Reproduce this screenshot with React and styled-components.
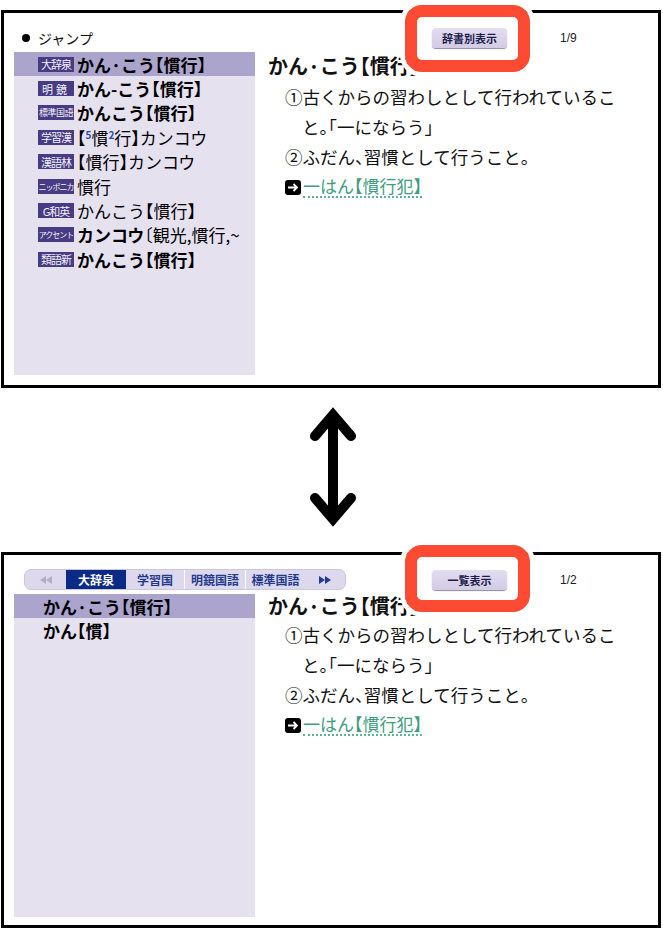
import styled, { createGlobalStyle } from "styled-components";

const GlobalStyle = createGlobalStyle`
  body {
    margin: 0;
    background: #fff;
    font-family: "Noto Sans CJK JP", "Noto Sans", sans-serif;
    color: #111;
  }
`;

const Page = styled.div`
  width: 663px;
  padding: 10px 0 0 1px;
  box-sizing: border-box;
`;

const Frame = styled.div`
  position: relative;
  width: 660px;
  height: ${(props) => props.height}px;
  box-sizing: border-box;
  border: 3px solid #000;
  display: flex;
  flex-direction: column;
  padding: 0 0 ${(props) => props.bottom}px 10px;
`;

const Highlight = styled.div`
  position: absolute;
  left: 401px;
  top: ${(props) => props.top}px;
  width: 125px;
  height: 67px;
  box-sizing: border-box;
  border: 12px solid #fd4a33;
  border-radius: 17px;
  box-shadow: 0 0 0 5px #fff;
  pointer-events: none;
`;

const Header = styled.div`
  height: 39px;
  flex-shrink: 0;
  display: grid;
  grid-template-columns: 418px 128px auto;
  align-items: center;
  padding-top: 10px;
  box-sizing: border-box;
`;

const Jump = styled.div`
  display: flex;
  align-items: center;
  gap: 8px;
  padding-left: 8px;
  font-size: 14px;

  &::before {
    content: "";
    width: 8px;
    height: 8px;
    border-radius: 50%;
    background: #000;
  }
`;

const ModeButton = styled.div`
  width: 75px;
  height: 20px;
  display: flex;
  align-items: center;
  justify-content: center;
  border-radius: 4px;
  background: linear-gradient(#e2ddf0, #d2cbe4);
  box-shadow: 0 1px 1px 0 #8f8aa3;
  font-size: 11px;
  font-weight: bold;
  color: #1d1d4d;
`;

const PageCount = styled.div`
  font-family: "Liberation Sans", Arial, sans-serif;
  font-size: 12px;
  color: #222;
`;

const TabBar = styled.div`
  margin-left: 10px;
  width: 322px;
  height: 21px;
  box-sizing: border-box;
  display: flex;
  align-items: stretch;
  background: #ddd8eb;
  border: 1px solid #cbc5de;
  border-radius: 7px;
  overflow: hidden;
`;

const Tab = styled.div`
  width: ${(props) => props.width}px;
  display: flex;
  align-items: center;
  justify-content: center;
  font-size: 12px;
  font-weight: bold;
  color: ${(props) => (props.active ? "#fff" : "#1f3a8f")};
  background: ${(props) => (props.active ? "#0b2a86" : "transparent")};
  border-right: ${(props) => (props.divider ? "1px solid #fff" : "none")};
  box-sizing: border-box;
`;

const Body = styled.div`
  flex: 1;
  display: grid;
  grid-template-columns: 241px 1fr;
  column-gap: 13px;
  min-height: 0;
`;

const List = styled.div`
  background: #e6e1ef;
  overflow: hidden;
`;

const Row = styled.div`
  height: ${(props) => props.h}px;
  display: flex;
  align-items: center;
  gap: 3px;
  padding-left: ${(props) => props.indent}px;
  background: ${(props) => (props.selected ? "#aba5cd" : "transparent")};
  white-space: nowrap;
  overflow: hidden;
`;

const DictLabel = styled.span`
  flex-shrink: 0;
  width: 36px;
  height: 15px;
  display: inline-flex;
  align-items: center;
  justify-content: center;
  background: #473b83;
  color: #f4f2fa;
  font-size: ${(props) => props.size}px;
  letter-spacing: ${(props) => props.spacing}px;
  white-space: nowrap;
  overflow: hidden;
`;

const Word = styled.span`
  font-size: 17px;
  font-weight: ${(props) => (props.bold ? "bold" : "normal")};
  font-feature-settings: "halt";
  color: #000;
`;

const Sup = styled.sup`
  font-size: 10px;
  font-weight: bold;
  color: #2449b3;
  vertical-align: 6px;
  line-height: 0;
`;

const Content = styled.div`
  padding-right: 20px;
`;

const Title = styled.div`
  font-size: 20px;
  font-weight: bold;
  font-feature-settings: "halt";
  line-height: ${(props) => props.lh}px;
  margin-bottom: 2px;
  white-space: nowrap;
`;

const Line = styled.div`
  font-size: 17.5px;
  line-height: 30px;
  font-feature-settings: "halt";
  padding-left: ${(props) => props.indent}px;
  white-space: nowrap;
`;

const JumpLink = styled.div`
  display: flex;
  align-items: center;
  gap: 2px;
  height: 30px;
  padding-left: 17px;
`;

const LinkText = styled.span`
  font-size: 17px;
  line-height: 20px;
  font-feature-settings: "halt";
  color: #3f9d80;
  border-bottom: 2px dotted #5cb396;
`;

const ArrowZone = styled.div`
  height: 164px;
  display: flex;
  justify-content: center;
  align-items: flex-start;
  padding: 17px 0 0 2px;
  box-sizing: border-box;
`;

function LinkIcon() {
  return (
    <svg width="16" height="15" viewBox="0 0 16 15">
      <rect x="0" y="0" width="16" height="15" rx="3" fill="#000" />
      <path d="M3 7.5 H12 M8.5 4 L12 7.5 L8.5 11" stroke="#fff" strokeWidth="1.8" fill="none" />
    </svg>
  );
}

function Rewind({ color, flip }) {
  return (
    <svg width="12" height="8" viewBox="0 0 12 8" style={flip ? { transform: "scaleX(-1)" } : undefined}>
      <path d="M6 0 L0 4 L6 8 Z M12 0 L6 4 L12 8 Z" fill={color} />
    </svg>
  );
}

function DoubleArrow() {
  return (
    <svg width="50" height="124" viewBox="0 0 50 124">
      <g stroke="#000" strokeWidth="10" fill="none" strokeLinecap="round" strokeLinejoin="miter">
        <path d="M25 12 V112" strokeLinecap="butt" />
        <polyline points="7,31 25,10 43,31" />
        <polyline points="7,93 25,114 43,93" />
      </g>
    </svg>
  );
}

const entries = [
  { label: "大辞泉", size: 11, spacing: -1, bold: true, text: "かん·こう【慣行】", selected: true },
  { label: "明鏡", size: 11, spacing: 3, bold: true, text: "かん-こう【慣行】" },
  { label: "標準国語", size: 9, spacing: -0.5, bold: true, text: "かんこう【慣行】" },
  {
    label: "学習漢",
    size: 11,
    spacing: -1,
    text: (
      <>
        【<Sup>5</Sup>慣<Sup>2</Sup>行】カンコウ
      </>
    ),
  },
  { label: "漢語林", size: 11, spacing: -1, text: "【慣行】カンコウ" },
  { label: "ニッポニカ", size: 8, spacing: -1, text: "慣行" },
  { label: "G和英", size: 11, spacing: -1, text: "かんこう【慣行】" },
  {
    label: "アクセント",
    size: 8,
    spacing: -1,
    text: (
      <>
        <b>カンコウ</b>〔観光,慣行,~
      </>
    ),
  },
  { label: "類語新", size: 11, spacing: -1, bold: true, text: "かんこう【慣行】" },
];

function Definition({ titleHeight }) {
  return (
    <Content>
      <Title lh={titleHeight}>かん·こう【慣行】</Title>
      <Line indent={17}>①古くからの習わしとして行われているこ</Line>
      <Line indent={34}>と。「一にならう」</Line>
      <Line indent={17}>②ふだん、習慣として行うこと。</Line>
      <JumpLink>
        <LinkIcon />
        <LinkText>一はん【慣行犯】</LinkText>
      </JumpLink>
    </Content>
  );
}

export default function App() {
  return (
    <Page>
      <GlobalStyle />
      <Frame height={378} bottom={10}>
        <Header>
          <Jump>ジャンプ</Jump>
          <ModeButton>辞書別表示</ModeButton>
          <PageCount>1/9</PageCount>
        </Header>
        <Body>
          <List>
            {entries.map((e) => (
              <Row key={e.label} h={24.4} indent={24} selected={e.selected}>
                <DictLabel size={e.size} spacing={e.spacing}>
                  {e.label}
                </DictLabel>
                <Word bold={e.bold}>{e.text}</Word>
              </Row>
            ))}
          </List>
          <Definition titleHeight={28} />
        </Body>
        <Highlight top={-8} />
      </Frame>

      <ArrowZone>
        <DoubleArrow />
      </ArrowZone>

      <Frame height={376} bottom={8}>
        <Header>
          <TabBar>
            <Tab width={41}>
              <Rewind color="#b3adc9" />
            </Tab>
            <Tab width={60} active>
              大辞泉
            </Tab>
            <Tab width={59} divider>
              学習国
            </Tab>
            <Tab width={61} divider>
              明鏡国語
            </Tab>
            <Tab width={59}>標準国語</Tab>
            <Tab width={40}>
              <Rewind color="#1f3a8f" flip />
            </Tab>
          </TabBar>
          <ModeButton>一覧表示</ModeButton>
          <PageCount>1/2</PageCount>
        </Header>
        <Body>
          <List>
            <Row h={24} indent={29} selected>
              <Word bold>かん·こう【慣行】</Word>
            </Row>
            <Row h={24} indent={29}>
              <Word bold>かん【慣】</Word>
            </Row>
          </List>
          <Definition titleHeight={24} />
        </Body>
        <Highlight top={-10} />
      </Frame>
    </Page>
  );
}
